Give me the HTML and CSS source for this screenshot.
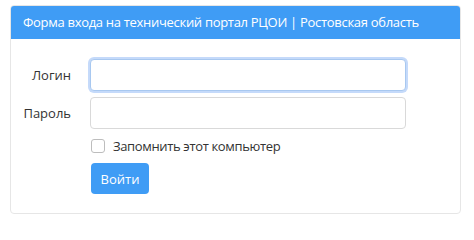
FILE: index.html
```html
<!DOCTYPE html>
<html lang="ru">
<head>
<meta charset="utf-8">
<title>Вход</title>
<link rel="stylesheet" href="styles.css">
</head>
<body>
<div class="card">
  <div class="card-header">Форма входа на технический портал РЦОИ | Ростовская область</div>
  <form class="card-body">
    <div class="row">
      <label class="label" for="login">Логин</label>
      <input class="input focused" id="login" type="text">
    </div>
    <div class="row">
      <label class="label" for="pass">Пароль</label>
      <input class="input" id="pass" type="password">
    </div>
    <div class="row check-row">
      <span class="label"></span>
      <label class="check"><span class="box"></span><span class="check-text">Запомнить этот компьютер</span></label>
    </div>
    <div class="row btn-row">
      <span class="label"></span>
      <button class="btn" type="button">Войти</button>
    </div>
  </form>
</div>
</body>
</html>
```
FILE: styles.css
```css
html, body {
  margin: 0;
  background: #ffffff;
}
body {
  padding: 5px 13px 0 10px;
  font-family: "Open Sans", "Noto Sans", sans-serif;
  font-size: 13px;
  color: #333;
}
.card {
  width: 449px;
  border: 1px solid #e6e6e6;
  border-radius: 4px;
  overflow: hidden;
  background: #fff;
}
.card-header {
  background: #3f9cf5;
  color: #fff;
  height: 33px;
  line-height: 33px;
  padding-left: 12px;
  font-size: 13px;
  letter-spacing: -0.3px;
  white-space: nowrap;
}
.card-body {
  padding: 20px 0 19px 0;
  margin: 0;
}
.row {
  display: flex;
  align-items: center;
  margin-bottom: 6px;
}
.label {
  width: 60px;
  text-align: right;
  margin-right: 19px;
  flex: none;
  font-size: 13px;
  color: #333;
}
.input {
  width: 316px;
  height: 32px;
  box-sizing: border-box;
  border: 1px solid #d9d9d9;
  border-radius: 4px;
  outline: none;
  margin: 0;
  padding: 0 8px;
  background: #fff;
}
.input.focused {
  border-color: #a8c8f0;
  box-shadow: 0 0 0 2px #c5dafa;
}
.check-row {
  margin-top: 8px;
  margin-bottom: 8px;
}
.check {
  display: flex;
  align-items: center;
  color: #333;
}
.check-text {
  letter-spacing: -0.35px;
}
.box {
  width: 12px;
  height: 12px;
  border: 1px solid #bdbdbd;
  border-radius: 3px;
  margin: 0 8px 0 1px;
  background: #fff;
}
.btn {
  background: #3f9cf5;
  color: #fff;
  border: none;
  border-radius: 4px;
  width: 58px;
  height: 31px;
  font-family: inherit;
  font-size: 13px;
  margin-left: 1px;
  padding: 0;
}
.btn-row {
  margin-bottom: 0;
}
```
